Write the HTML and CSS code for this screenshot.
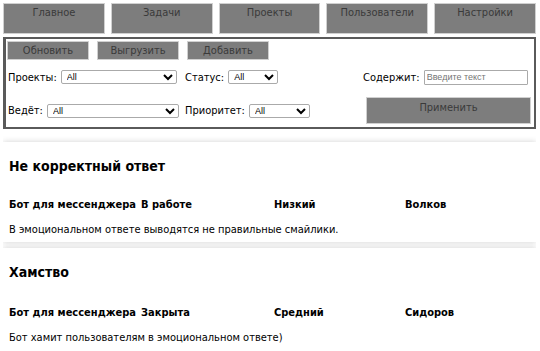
FILE: index.html
```html
<!DOCTYPE html>
<html lang="ru">
<head>
    <meta charset="UTF-8">
    <meta name="viewport" content="width=device-width, initial-scale=1.0">
    <title>Задачи</title>
    <link rel="stylesheet" href="styles.css">
</head>
<body>

    <nav class="menu">
        <button>Главное</button>
        <button>Задачи</button>
        <button>Проекты</button>
        <button>Пользователи</button>
        <button>Настройки</button>
    </nav>

    <div class="filters">
        <div class="actions">
            <button>Обновить</button>
            <button>Выгрузить</button>
            <button>Добавить</button>
        </div>

        <div class="filter-grid">
            <div class="field f-project">
                <label for="project">Проекты:</label>
                <select id="project"><option>All</option></select>
            </div>
            <div class="field f-status">
                <label for="status">Статус:</label>
                <select id="status"><option>All</option></select>
            </div>
            <div class="field f-search">
                <label for="search">Содержит:</label>
                <input type="text" id="search" placeholder="Введите текст">
            </div>

            <div class="field f-owner">
                <label for="owner">Ведёт:</label>
                <select id="owner"><option>All</option></select>
            </div>
            <div class="field f-priority">
                <label for="priority">Приоритет:</label>
                <select id="priority"><option>All</option></select>
            </div>
            <div class="field f-apply">
                <button class="apply">Применить</button>
            </div>
        </div>
    </div>

    <div class="task">
        <h3>Не корректный ответ</h3>
        <div class="task-info">
            <span>Бот для мессенджера</span>
            <span>В работе</span>
            <span>Низкий</span>
            <span>Волков</span>
        </div>
        <p>В эмоциональном ответе выводятся не правильные смайлики.</p>
    </div>

    <div class="task">
        <h3>Хамство</h3>
        <div class="task-info">
            <span>Бот для мессенджера</span>
            <span>Закрыта</span>
            <span>Средний</span>
            <span>Сидоров</span>
        </div>
        <p>Бот хамит пользователям в эмоциональном ответе)</p>
    </div>

</body>
</html>
```

FILE: styles.css
```css
body {
    font-family: 'DejaVu Sans Condensed', 'DejaVu Sans', Verdana, sans-serif;
    font-size: 11px;
    color: #000;
    background-color: #fff;
    margin: 3px 4px 3px 3px;
}
button {
    font-family: inherit;
    font-size: 11px;
    background-color: #7d7d7d;
    color: #3a3a3a;
    border: 1px solid #d0d0d0;
    cursor: pointer;
}
.menu {
    display: flex;
    gap: 6px;
}
.menu button {
    flex: 1;
    height: 31px;
    padding: 2px 0 0;
    display: flex;
    justify-content: center;
    align-items: flex-start;
}
.filters {
    margin-top: 3px;
    border: 2px solid #5a5a5a;
    border-left-width: 3px;
    padding: 2px 4px 4px 1px;
    height: 82px;
}
.actions {
    display: flex;
    gap: 8px;
}
.actions button {
    width: 82px;
    height: 19px;
    padding: 0;
}
.filter-grid {
    display: grid;
    grid-template-columns: 177px 178px 1fr;
    grid-template-rows: 32px 35px;
    align-items: center;
    margin-top: 1px;
    padding-left: 1px;
}
.field {
    display: flex;
    align-items: center;
    gap: 4px;
}
label {
    font-size: 11px;
}
select {
    font-family: 'Liberation Sans', Arial, sans-serif;
    font-size: 9px;
    height: 14px;
    padding: 0 0 0 1px;
    border: 1px solid #aaa;
    border-radius: 2px;
    background: #fff;
}
.f-project select { width: 116px; }
.f-status select { width: 50px; }
.f-owner select { width: 132px; }
.f-priority select { width: 61px; }
.f-search input {
    font-family: 'Liberation Sans', Arial, sans-serif;
    font-size: 9px;
    width: 98px;
    height: 11px;
    padding: 1px 2px;
    border: 1px solid #aaa;
    border-radius: 1px;
}
.f-apply {
    padding-left: 3px;
}
.apply {
    width: 165px;
    height: 27px;
    padding: 0 0 6px;
}
.task {
    margin-top: 13px;
    padding: 1px 6px;
    background-color: #fff;
    box-shadow: 0 0 6px rgba(0, 0, 0, 0.18);
}
.task + .task {
    margin-top: 6px;
}
.task h3 {
    font-size: 14px;
    margin: 15px 0 0;
}
.task-info {
    display: grid;
    grid-template-columns: 132px 133px 131px 1fr;
    font-weight: bold;
    margin-top: 24px;
}
.task + .task .task-info {
    margin-top: 26px;
}
.task p {
    margin: 12px 0 5px;
}
```
